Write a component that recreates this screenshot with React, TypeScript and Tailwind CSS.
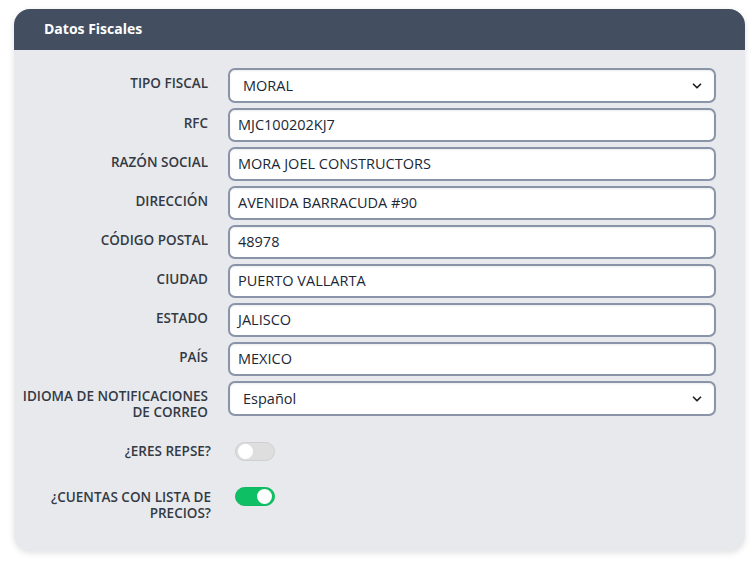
import { ChevronDown } from 'lucide-react'

const fields = [
  { label: 'RFC', value: 'MJC100202KJ7' },
  { label: 'RAZÓN SOCIAL', value: 'MORA JOEL CONSTRUCTORS' },
  { label: 'DIRECCIÓN', value: 'AVENIDA BARRACUDA #90' },
  { label: 'CÓDIGO POSTAL', value: '48978' },
  { label: 'CIUDAD', value: 'PUERTO VALLARTA' },
  { label: 'ESTADO', value: 'JALISCO' },
  { label: 'PAÍS', value: 'MEXICO' },
]

function Label({ children }: { children: React.ReactNode }) {
  return (
    <div className="w-[194px] shrink-0 pt-[7px] text-right text-[13.5px] font-semibold uppercase leading-[16px] text-[#333a44]">
      {children}
    </div>
  )
}

function SelectBox({ value }: { value: string }) {
  return (
    <div className="flex h-[35px] flex-1 items-center justify-between rounded-[7px] border-2 border-[#8a94a8] bg-white pl-[13px] pr-[10px] text-[14.5px] text-[#1c2736] shadow-[inset_0_1px_2px_rgba(0,0,0,0.08)]">
      <span>{value}</span>
      <ChevronDown size={14} strokeWidth={3} className="text-[#222]" />
    </div>
  )
}

function Toggle({ on }: { on: boolean }) {
  return (
    <div
      className={
        on
          ? 'flex h-[19px] w-[40px] items-center justify-end rounded-full border border-[#10b860] bg-[#0fbf64] px-[2px]'
          : 'flex h-[19px] w-[40px] items-center justify-start rounded-full border border-[#cfcfcf] bg-[#dedede] px-[2px]'
      }
    >
      <div className="h-[15px] w-[15px] rounded-full bg-white" />
    </div>
  )
}

export default function App() {
  return (
    <div className="h-[569px] w-[753px] bg-white pt-[9px] pl-[14px] font-['Open_Sans',sans-serif]">
      <div className="w-[731px] overflow-hidden rounded-[16px] bg-[#e8e9ed] shadow-[0_2px_6px_rgba(0,0,0,0.12)]">
        <div className="flex h-[41px] items-center bg-[#434f60] pb-[3px] pl-[30px] text-[14px] font-bold text-white">
          Datos Fiscales
        </div>
        <div className="flex flex-col pt-[18px] pb-[30px] pr-[29px]">
          <div className="flex gap-[20px]">
            <Label>TIPO FISCAL</Label>
            <SelectBox value="MORAL" />
          </div>
          {fields.map((f) => (
            <div key={f.label} className="mt-[5px] flex gap-[20px]">
              <Label>{f.label}</Label>
              <div className="flex h-[34px] flex-1 items-center rounded-[7px] border-2 border-[#8a94a8] bg-white pl-[8px] text-[14.5px] text-[#1c2736] shadow-[inset_0_1px_2px_rgba(0,0,0,0.08)]">
                {f.value}
              </div>
            </div>
          ))}
          <div className="mt-[5px] flex gap-[20px]">
            <Label>IDIOMA DE NOTIFICACIONES DE CORREO</Label>
            <SelectBox value="Español" />
          </div>
          <div className="mt-[22px] flex gap-[24px]">
            <div className="w-[197px] shrink-0 pt-[1px] text-right text-[13.5px] font-semibold leading-[16px] text-[#333a44]">
              ¿ERES REPSE?
            </div>
            <Toggle on={false} />
          </div>
          <div className="mt-[26px] flex gap-[24px]">
            <div className="w-[197px] shrink-0 pt-[2px] text-right text-[13.5px] font-semibold leading-[16px] text-[#333a44]">
              ¿CUENTAS CON LISTA DE PRECIOS?
            </div>
            <Toggle on={true} />
          </div>
        </div>
      </div>
    </div>
  )
}
